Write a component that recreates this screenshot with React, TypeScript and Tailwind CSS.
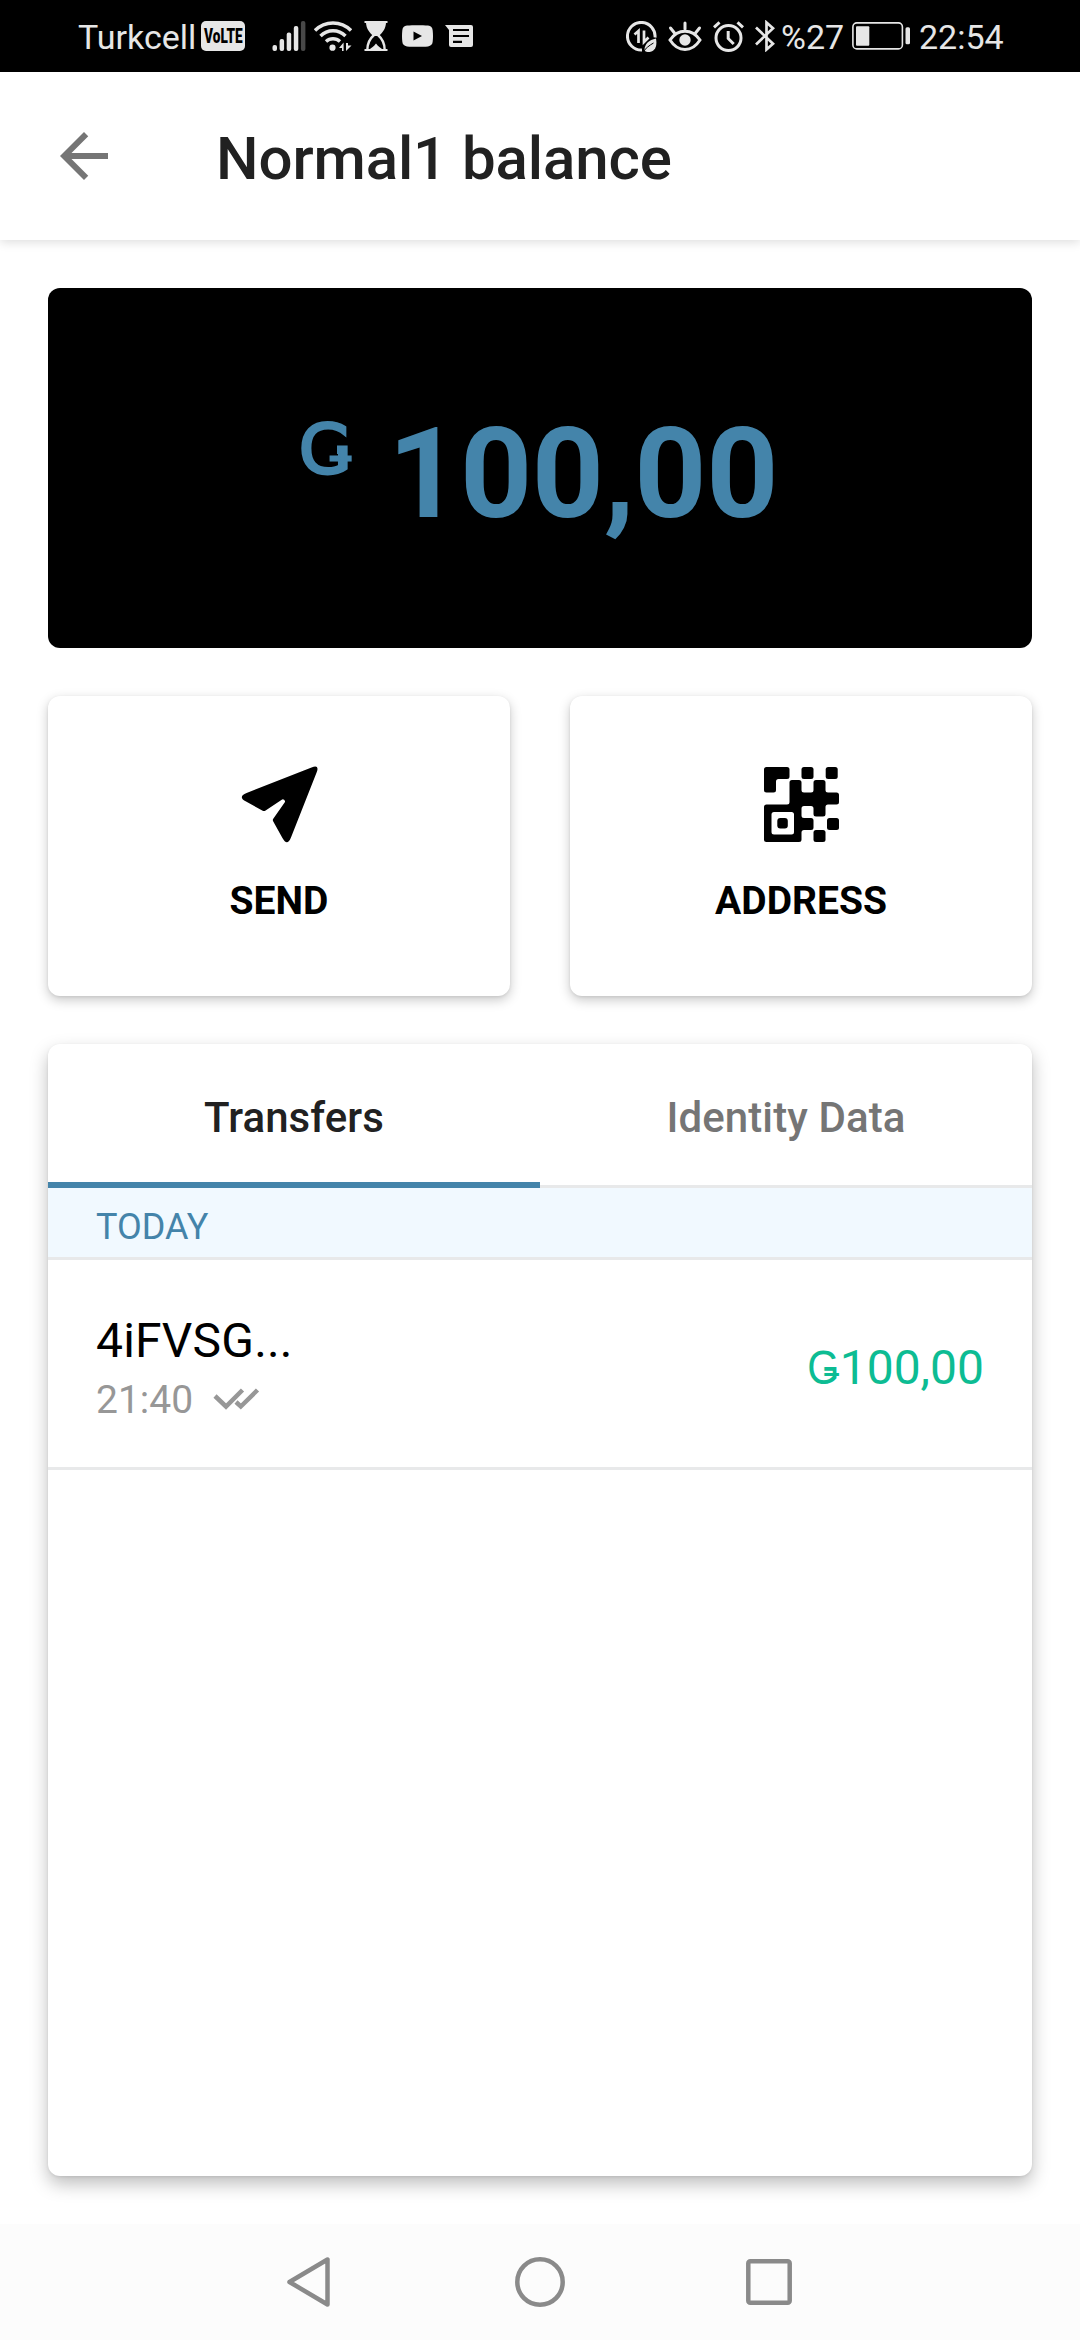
import type { ReactNode } from "react";

type Corner = [x: number, y: number, cut?: number];

/** Closed polygon path whose corners are cut back and smoothed. */
function roundedPath(points: Corner[], radius = 2.5): string {
  const n = points.length;
  const toward = (a: Corner, b: Corner, d: number) => {
    const len = Math.hypot(b[0] - a[0], b[1] - a[1]);
    return `${a[0] + ((b[0] - a[0]) * d) / len} ${a[1] + ((b[1] - a[1]) * d) / len}`;
  };
  return (
    points
      .map((p, i) => {
        const d = p[2] ?? radius;
        const prev = points[(i + n - 1) % n];
        const next = points[(i + 1) % n];
        return `${i === 0 ? "M" : "L"}${toward(p, prev, d)}Q${p[0]} ${p[1]} ${toward(p, next, d)}`;
      })
      .join("") + "Z"
  );
}

const SEND_PATH = roundedPath([
  [77.9, -2.9, 9],
  [45.3, 79.7, 10],
  [30.4, 53, 1.5],
  [43.5, 34.2, 1.5],
  [41, 31.8, 1.5],
  [22, 44.5, 1.5],
  [-4.7, 29.7, 10],
]);

const QR_BODY = roundedPath([
  [25.5, 13], [37.5, 13], [37.5, 25.5], [49.5, 25.5], [49.5, 13], [61.5, 13],
  [61.5, 25.5], [75, 25.5], [75, 37.5], [61.5, 37.5], [61.5, 49.5], [49.5, 49.5],
  [49.5, 39], [37.5, 39], [37.5, 51], [49.5, 51], [49.5, 63], [37.5, 63],
  [37.5, 75], [0, 75], [0, 37.5], [25.5, 37.5],
]);
const QR_HOLE = roundedPath([[7.5, 45], [30, 45], [30, 67.5], [7.5, 67.5]]);
const QR_ELBOW = roundedPath([[0, 0], [25.5, 0], [25.5, 12], [12, 12], [12, 25.5], [0, 25.5]]);

function SendIcon() {
  return (
    <svg width="75" height="75" viewBox="0 0 75 75" className="overflow-visible">
      <path d={SEND_PATH} />
    </svg>
  );
}

function QrIcon() {
  return (
    <svg width="75" height="75" viewBox="0 0 75 75">
      <path d={QR_BODY + QR_HOLE} fillRule="evenodd" />
      <path d={QR_ELBOW} />
      <rect x="13.3" y="51" width="10.5" height="10.5" rx="3" />
      <rect x="37.5" y="0" width="12" height="12" rx="2.5" />
      <rect x="61.7" y="0" width="12" height="12" rx="2.5" />
      <rect x="63" y="51" width="12" height="12" rx="2.5" />
      <rect x="49.5" y="63" width="12" height="12" rx="2.5" />
    </svg>
  );
}

function StatusBar() {
  return (
    <div className="flex h-[72px] shrink-0 items-center bg-black text-[#e6e6e6]">
      <span className="ml-[78px] w-[123px] whitespace-nowrap pt-px text-[34px] leading-[72px]">Turkcell</span>
      <span className="flex h-[30px] w-[44px] items-center justify-center overflow-hidden rounded-[5px] bg-[#e6e6e6] text-black">
        <span className="shrink-0 scale-x-[0.68] whitespace-nowrap text-[20px] font-black leading-none">VoLTE</span>
      </span>
      <svg className="ml-[27px]" width="34" height="30" viewBox="0 0 34 30" fill="currentColor">
        <rect x="0.5" y="24" width="4.5" height="6" rx="2" />
        <rect x="7.6" y="18" width="4.5" height="12" rx="2" />
        <rect x="14.7" y="11.5" width="4.5" height="18.5" rx="2" />
        <rect x="21.8" y="5" width="4.5" height="25" rx="2" />
        <rect x="28.9" y="0" width="4.5" height="30" rx="2" fill="#484848" />
      </svg>
      <svg className="ml-[8px]" width="38" height="30" viewBox="0 0 38 30" fill="none" stroke="currentColor" strokeWidth="3.4">
        <path d="M1 9.5C11 -.6 27 -.6 37 9.5" />
        <path d="M6.5 15C13.5 8 24.5 8 31.5 15" />
        <path d="M12 20.5C16 16.8 22 16.8 26 20.5" />
        <circle cx="18.5" cy="26.7" r="3.1" fill="currentColor" stroke="none" />
        <path d="M25 27l4.6-5.5V30H28v-3zM32 22v8l5.500-5.500H34V22z" fill="currentColor" stroke="none" />
      </svg>
      <svg className="ml-[12px]" width="24" height="30" viewBox="0 0 24 30" fill="currentColor">
        <path d="M.5 0h23v2H.5zM.5 28h23v2H.5z" />
        <path d="M2 1h20c0 6-3 10.500-7.500 14h-5C5 11.500 2 7 2 1z" />
        <path d="M10 14C6 17.500 3.300 22 3.300 29M14 14c4 3.500 6.700 8 6.700 15" fill="none" stroke="currentColor" strokeWidth="2.400" />
        <path d="M5 29c2-2.500 4.500-3 7-6.500 2.500 3.500 5 4 7 6.500z" />
      </svg>
      <svg className="ml-[14px]" width="31" height="22" viewBox="0 0 31 22">
        <path d="M5 .6C11 0 20 0 26 .6c3 .3 4.500 2 4.700 4.800.4 4 .4 7.500 0 11.200-.2 2.800-1.700 4.500-4.700 4.800-6 .6-15 .6-21 0C2 21.100.5 19.400.3 16.600c-.4-3.700-.4-7.200 0-11.200C.5 2.600 2 .9 5 .6z" fill="currentColor" />
        <path d="M11.500 6.500v9l8.500-4.500z" fill="#000" />
      </svg>
      <svg className="ml-[12px]" width="28" height="22" viewBox="0 0 28 22">
        <path d="M0 0h26a2 2 0 0 1 2 2v18a2 2 0 0 1-2 2H6a2 2 0 0 1-2-2V5z" fill="currentColor" />
        <path d="M8 5h16M8 11h16M8 16.800h9" stroke="#000" strokeWidth="2.200" />
      </svg>

      <svg className="ml-[153px]" width="31" height="31" viewBox="0 0 31 31" fill="none">
        <path d="M29 16.500A13.800 13.800 0 1 0 16 29" stroke="currentColor" strokeWidth="3" />
        <path d="M8.500 13.500L12.500 10v12M18 9.500V21l4.500-4.500" stroke="currentColor" strokeWidth="2.700" />
        <path d="M30 17.500c1.500 8-1 13.500-8.500 13.500-1.500 0-2.500-.8-3-2 0-6 4.500-10 11.500-11.500z" fill="currentColor" />
        <path d="M17 31c2.500-3.500 6-6.500 10.500-9" stroke="#000" strokeWidth="1" />
      </svg>
      <svg className="ml-[11px]" width="34" height="31" viewBox="0 0 34 31" fill="none" stroke="currentColor" strokeWidth="3" strokeLinecap="round">
        <path d="M2 19C10 7.300 24 7.300 32 19 24 31.700 10 31.700 2 19z" />
        <path d="M17 2v6M2.500 7l4 5M31.500 7l-4 5" />
        <circle cx="17" cy="19" r="5.700" fill="currentColor" stroke="none" />
      </svg>
      <svg className="ml-[11px]" width="31" height="31" viewBox="0 0 31 31" fill="none" stroke="currentColor" strokeWidth="3">
        <circle cx="15.500" cy="17" r="12.500" />
        <path d="M15.200 10v7.500l5.500 5.500M1 6.300l5.500-5M30 6.300l-5.500-5" strokeLinecap="butt" />
      </svg>
      <svg className="ml-[11px]" width="21" height="32" viewBox="0 0 21 32" fill="none" stroke="currentColor" strokeWidth="2.700">
        <path d="M1 7.500L18 23.800l-6.500 5.700v-27L18 8.200 1 24.500" />
      </svg>
      <span className="ml-[5px] w-[71px] whitespace-nowrap pt-px text-[34px] leading-[72px]">%27</span>
      <svg width="60" height="28" viewBox="0 0 60 28" fill="currentColor">
        <rect x="0.900" y="0.900" width="49.500" height="26" rx="4" fill="none" stroke="currentColor" strokeWidth="1.600" />
        <rect x="4" y="4.300" width="13.300" height="19.500" rx="1" />
        <rect x="53.500" y="5.300" width="4.500" height="17" rx="1.500" />
      </svg>
      <span className="ml-[7px] whitespace-nowrap pt-px text-[34px] leading-[72px]">22:54</span>
    </div>
  );
}

function ActionCard({ icon, label }: { icon: ReactNode; label: string }) {
  return (
    <button className="flex h-[300px] flex-col items-center rounded-[12px] bg-white pt-[71px] shadow-[0_4px_12px_rgba(0,0,0,0.22),0_1px_3px_rgba(0,0,0,0.08)]">
      {icon}
      <span className="mt-[39px] text-[39px] font-bold leading-[40px] text-black">{label}</span>
    </button>
  );
}

export default function App() {
  return (
    <div className="flex h-[2340px] w-[1080px] flex-col overflow-hidden bg-white font-[Roboto,sans-serif]">
      <StatusBar />
      <header className="flex h-[168px] shrink-0 items-center bg-white shadow-[0_2px_10px_rgba(0,0,0,0.14)]">
        <svg className="ml-[48px]" width="72" height="72" viewBox="0 0 24 24" fill="#757575">
          <path d="M20 11H7.830l5.590-5.590L12 4l-8 8 8 8 1.410-1.410L7.830 13H20v-2z" />
        </svg>
        <h1 className="ml-[96px] pt-[5px] text-[60px] font-medium leading-[72px] tracking-[-0.1px] text-[#212121]">Normal1 balance</h1>
      </header>

      <main className="flex grow flex-col px-[48px] pt-[48px]">
        <section className="flex h-[360px] shrink-0 rounded-[12px] bg-black font-bold text-[#4484aa]">
          {/* The currency sign keeps only its lower cross stroke, so the inner arm is masked. */}
          <span className="relative ml-[251px] mt-[128px] h-[68px] w-[89px] font-['DejaVu_Sans',sans-serif] text-[68px] font-normal leading-[68px] [-webkit-text-stroke:3px_#4484aa] after:absolute after:left-[26.5px] after:top-[29px] after:h-[10px] after:w-[11px] after:bg-black after:content-['']">
            Ǥ
          </span>
          <span className="mt-[123px] text-[126px] leading-[126px] tracking-[-0.4px]">100,00</span>
        </section>

        <section className="mt-[48px] grid shrink-0 grid-cols-2 gap-[60px]">
          <ActionCard icon={<SendIcon />} label="SEND" />
          <ActionCard icon={<QrIcon />} label="ADDRESS" />
        </section>

        <section className="mt-[48px] flex h-[1132px] shrink-0 flex-col overflow-hidden rounded-[12px] bg-white shadow-[0_8px_18px_rgba(0,0,0,0.26),0_1px_3px_rgba(0,0,0,0.08)]">
          <div className="grid h-[144px] shrink-0 grid-cols-2 text-center text-[42px] font-medium leading-[130px] tracking-[0.1px]">
            <div className="h-[144px] border-b-[6px] border-[#4484aa] pt-[9px] text-[#212121]">Transfers</div>
            <div className="h-[144px] border-b-[3px] border-[#e8e9ea] pt-[9px] text-[#757575]">Identity Data</div>
          </div>
          <div className="h-[72px] shrink-0 border-b-[3px] border-[#e8e9ea] bg-[#f1f9ff] pl-[48px] pt-[7px] text-[36px] leading-[64px] text-[#4484aa]">
            TODAY
          </div>
          <div className="flex h-[210px] shrink-0 items-center justify-between border-b-[3px] border-[#e8e9ea] px-[48px]">
            <div className="pt-[12px]">
              <div className="text-[48px] leading-[60px] tracking-[0.2px] text-black">4iFVSG...</div>
              <div className="flex items-center text-[39px] leading-[58px] text-[#979797]">
                <span>21:40</span>
                <svg className="mb-[2px] ml-[20px]" width="47" height="24" viewBox="0 0 47 24" fill="none" stroke="currentColor" strokeWidth="4.500">
                  <path d="M2 9L13 19.500 29.500 3M23 15l4.800 4.500L44.500 3" />
                </svg>
              </div>
            </div>
            <div className="flex pt-[8px] text-[48px] leading-[60px] text-[#0dbc93]">
              <span className="origin-right scale-x-[0.86] font-['Liberation_Sans',sans-serif]">Ǥ</span>
              <span>100,00</span>
            </div>
          </div>
        </section>
      </main>

      <nav className="flex h-[116px] shrink-0 items-center bg-[#fcfcfc]">
        <svg className="ml-[286px]" width="46" height="52" viewBox="0 0 46 52" fill="none" stroke="#8a8a8a" strokeWidth="4.500" strokeLinejoin="round">
          <path d="M3.500 26L41.500 3.500v45z" />
        </svg>
        <svg className="ml-[182px]" width="52" height="52" viewBox="0 0 52 52" fill="none" stroke="#8a8a8a" strokeWidth="4.500">
          <circle cx="26" cy="26" r="22.700" />
        </svg>
        <svg className="ml-[180px]" width="46" height="46" viewBox="0 0 46 46" fill="none" stroke="#8a8a8a" strokeWidth="4.500">
          <rect x="2.300" y="2.300" width="41.400" height="41.400" rx="2" />
        </svg>
      </nav>
    </div>
  );
}
